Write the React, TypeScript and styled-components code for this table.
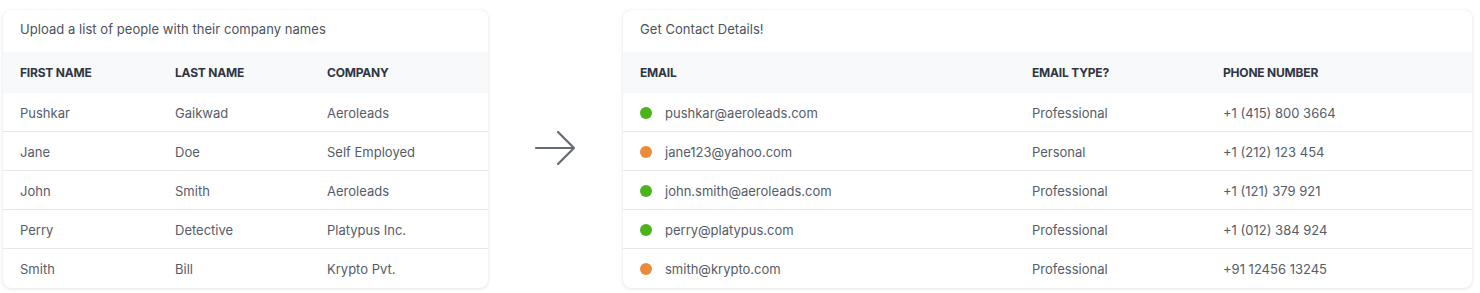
import * as React from 'react';
import styled, { createGlobalStyle } from 'styled-components';

type Person = { first: string; last: string; company: string };
type Contact = { email: string; kind: string; phone: string; verified: boolean };

const people: Person[] = [
    { first: 'Pushkar', last: 'Gaikwad', company: 'Aeroleads' },
    { first: 'Jane', last: 'Doe', company: 'Self Employed' },
    { first: 'John', last: 'Smith', company: 'Aeroleads' },
    { first: 'Perry', last: 'Detective', company: 'Platypus Inc.' },
    { first: 'Smith', last: 'Bill', company: 'Krypto Pvt.' },
];

const contacts: Contact[] = [
    { email: 'pushkar@aeroleads.com', kind: 'Professional', phone: '+1 (415) 800 3664', verified: true },
    { email: 'jane123@yahoo.com', kind: 'Personal', phone: '+1 (212) 123 454', verified: false },
    { email: 'john.smith@aeroleads.com', kind: 'Professional', phone: '+1 (121) 379 921', verified: true },
    { email: 'perry@platypus.com', kind: 'Professional', phone: '+1 (012) 384 924', verified: true },
    { email: 'smith@krypto.com', kind: 'Professional', phone: '+91 12456 13245', verified: false },
];

const GlobalStyle = createGlobalStyle`
    body {
        margin: 0;
        background: #ffffff;
        font-family: Inter, "Liberation Sans", sans-serif;
    }
`;

const App = () => {
    return (
        <>
            <GlobalStyle />
            <Page>
                <Card $width={485}>
                    <Title>Upload a list of people with their company names</Title>
                    <HeadRow $cols="155px 152px 1fr">
                        <span>First name</span>
                        <span>Last name</span>
                        <span>Company</span>
                    </HeadRow>
                    {people.map((p) => (
                        <Row key={p.first + p.last} $cols="155px 152px 1fr">
                            <span>{p.first}</span>
                            <span>{p.last}</span>
                            <span>{p.company}</span>
                        </Row>
                    ))}
                </Card>
                <ArrowBox>
                    <svg width="44" height="36" viewBox="0 0 44 36" fill="none">
                        <path d="M2 18H40M24 2L40 18L24 34" stroke="#646b78" strokeWidth="2.2" strokeLinecap="round" strokeLinejoin="round" />
                    </svg>
                </ArrowBox>
                <Card $width={849}>
                    <Title>Get Contact Details!</Title>
                    <HeadRow $cols="392px 191px 1fr">
                        <span>Email</span>
                        <span>Email type?</span>
                        <span>Phone number</span>
                    </HeadRow>
                    {contacts.map((c) => (
                        <Row key={c.email} $cols="392px 191px 1fr">
                            <EmailCell>
                                <Dot $verified={c.verified} />
                                {c.email}
                            </EmailCell>
                            <span>{c.kind}</span>
                            <span>{c.phone}</span>
                        </Row>
                    ))}
                </Card>
            </Page>
        </>
    );
};

export default App;

const Page = styled.div`
    display: flex;
    align-items: flex-start;
    padding: 10px 8px 5px 3px;
`;

const Card = styled.div<{ $width: number }>`
    width: ${(p) => p.$width}px;
    flex: none;
    background: #fff;
    border-radius: 8px;
    box-shadow: 0 1px 4px rgba(17, 24, 39, 0.1), 0 0 1px rgba(17, 24, 39, 0.08);
    overflow: hidden;
`;

const Title = styled.div`
    height: 38px;
    display: flex;
    align-items: center;
    padding: 0 17px 4px 17px;
    font-size: 13px;
    letter-spacing: 0.05px;
    color: #4b5260;
`;

const HeadRow = styled.div<{ $cols: string }>`
    display: grid;
    grid-template-columns: ${(p) => p.$cols};
    align-items: center;
    height: 41px;
    padding-left: 17px;
    background: #f8f9fb;
    font-size: 12px;
    font-weight: 700;
    letter-spacing: -0.2px;
    text-transform: uppercase;
    color: #2f3544;
`;

const Row = styled.div<{ $cols: string }>`
    display: grid;
    grid-template-columns: ${(p) => p.$cols};
    align-items: center;
    height: 37px;
    padding: 1px 0 0 17px;
    border-bottom: 1px solid #e6e8ec;
    font-size: 13px;
    color: #555c69;
    &:last-child {
        border-bottom: none;
        height: 38px;
    }
`;

const EmailCell = styled.span`
    display: flex;
    align-items: center;
    gap: 13px;
`;

const Dot = styled.i<{ $verified: boolean }>`
    display: block;
    width: 12px;
    height: 12px;
    border-radius: 50%;
    background: ${(p) => (p.$verified ? '#4bb41a' : '#ea8b3b')};
`;

const ArrowBox = styled.div`
    flex: 1;
    display: flex;
    justify-content: center;
    padding-top: 120px;
`;
